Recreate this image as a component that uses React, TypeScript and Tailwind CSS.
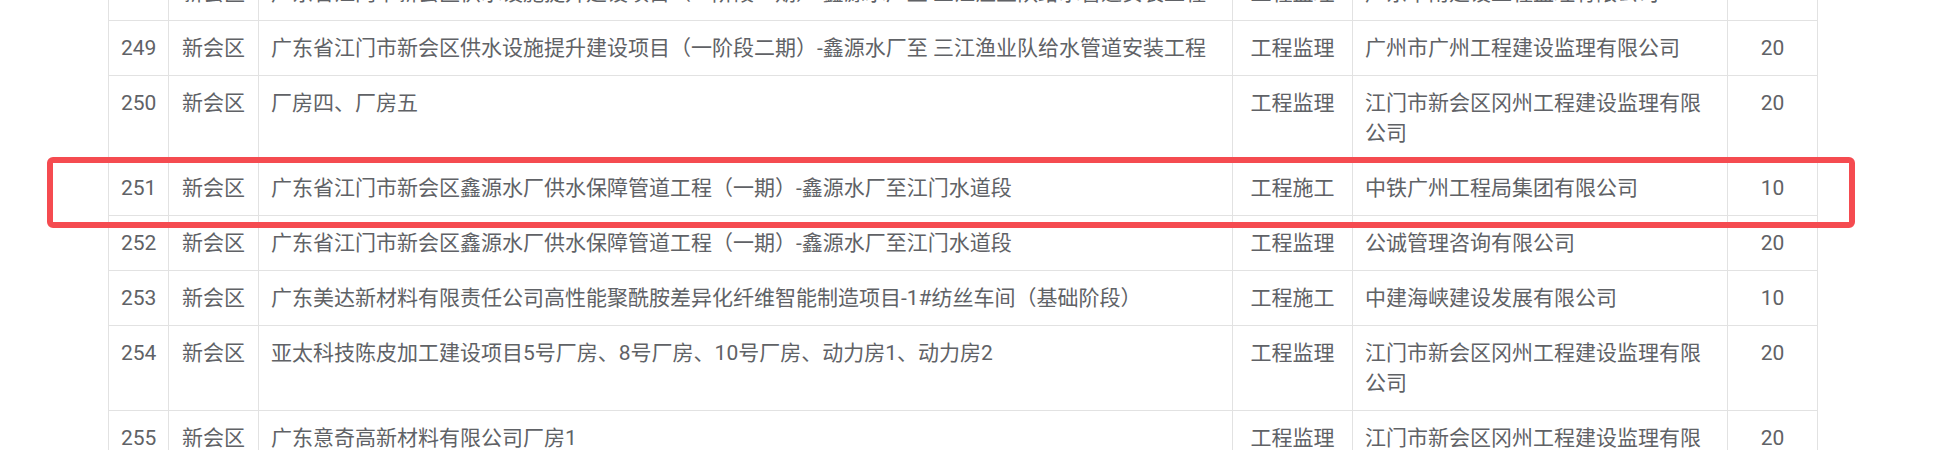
import React from 'react';

type Row = {
  no: string;
  area: string;
  name: string;
  kind: string;
  company: string;
  score: string;
};

const rows: Row[] = [
  {
    no: '248',
    area: '新会区',
    name: '广东省江门市新会区供水设施提升建设项目（一阶段一期）-鑫源水厂至 三江渔业队给水管道安装工程',
    kind: '工程监理',
    company: '广东华南建设工程监理有限公司',
    score: '20',
  },
  {
    no: '249',
    area: '新会区',
    name: '广东省江门市新会区供水设施提升建设项目（一阶段二期）-鑫源水厂至 三江渔业队给水管道安装工程',
    kind: '工程监理',
    company: '广州市广州工程建设监理有限公司',
    score: '20',
  },
  {
    no: '250',
    area: '新会区',
    name: '厂房四、厂房五',
    kind: '工程监理',
    company: '江门市新会区冈州工程建设监理有限公司',
    score: '20',
  },
  {
    no: '251',
    area: '新会区',
    name: '广东省江门市新会区鑫源水厂供水保障管道工程（一期）-鑫源水厂至江门水道段',
    kind: '工程施工',
    company: '中铁广州工程局集团有限公司',
    score: '10',
  },
  {
    no: '252',
    area: '新会区',
    name: '广东省江门市新会区鑫源水厂供水保障管道工程（一期）-鑫源水厂至江门水道段',
    kind: '工程监理',
    company: '公诚管理咨询有限公司',
    score: '20',
  },
  {
    no: '253',
    area: '新会区',
    name: '广东美达新材料有限责任公司高性能聚酰胺差异化纤维智能制造项目-1#纺丝车间（基础阶段）',
    kind: '工程施工',
    company: '中建海峡建设发展有限公司',
    score: '10',
  },
  {
    no: '254',
    area: '新会区',
    name: '亚太科技陈皮加工建设项目5号厂房、8号厂房、10号厂房、动力房1、动力房2',
    kind: '工程监理',
    company: '江门市新会区冈州工程建设监理有限公司',
    score: '20',
  },
  {
    no: '255',
    area: '新会区',
    name: '广东意奇高新材料有限公司厂房1',
    kind: '工程监理',
    company: '江门市新会区冈州工程建设监理有限公司',
    score: '20',
  },
];

const cell = 'border-r border-b border-[#e2e2e2] px-3 py-3 align-top';

const App: React.FC = () => {
  return (
    <div className="relative w-full h-[450px] overflow-hidden bg-white font-['Roboto','Noto_Sans_CJK_SC',sans-serif] text-[21px] leading-[30px] text-[#606266]">
      <div className="pl-[108px] -mt-[34px]">
        <table className="table-fixed border-separate border-spacing-0 w-[1710px]">
          <colgroup>
            <col className="w-[61px]" />
            <col className="w-[90px]" />
            <col className="w-[974px]" />
            <col className="w-[120px]" />
            <col className="w-[375px]" />
            <col className="w-[90px]" />
          </colgroup>
          <tbody>
            {rows.map((r) => (
              <tr key={r.no}>
                <td className={`${cell} border-l text-center px-0`}>{r.no}</td>
                <td className={`${cell} text-center px-0`}>{r.area}</td>
                <td className={cell}>{r.name}</td>
                <td className={`${cell} text-center px-0`}>{r.kind}</td>
                <td className={cell}>{r.company}</td>
                <td className={`${cell} text-center px-0`}>{r.score}</td>
              </tr>
            ))}
          </tbody>
        </table>
      </div>

      <div className="absolute left-[47px] top-[157px] w-[1808px] h-[71px] border-[6px] border-[#f54b50] rounded-[6px] pointer-events-none"></div>
    </div>
  );
};

export default App;
